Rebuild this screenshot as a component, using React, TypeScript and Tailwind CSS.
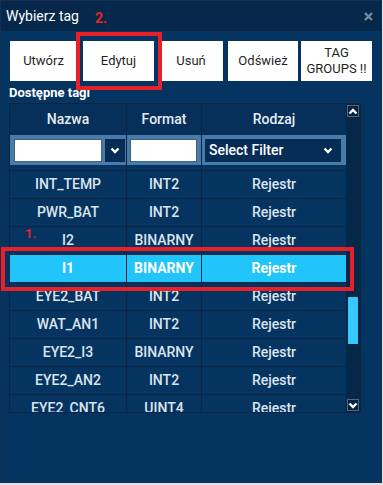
import React from "react";

interface TagRow {
  name: string;
  format: string;
  kind: string;
  selected?: boolean;
}

const rows: TagRow[] = [
  { name: "INT_TEMP", format: "INT2", kind: "Rejestr" },
  { name: "PWR_BAT", format: "INT2", kind: "Rejestr" },
  { name: "I2", format: "BINARNY", kind: "Rejestr" },
  { name: "I1", format: "BINARNY", kind: "Rejestr", selected: true },
  { name: "EYE2_BAT", format: "INT2", kind: "Rejestr" },
  { name: "WAT_AN1", format: "INT2", kind: "Rejestr" },
  { name: "EYE2_I3", format: "BINARNY", kind: "Rejestr" },
  { name: "EYE2_AN2", format: "INT2", kind: "Rejestr" },
  { name: "EYE2_CNT6", format: "UINT4", kind: "Rejestr" },
];

const Chevron = ({ up = false }: { up?: boolean }) => (
  <svg width="10" height="7" viewBox="0 0 10 7">
    <polyline
      points={up ? "1.5,5.5 5,2 8.5,5.5" : "1.5,1.5 5,5 8.5,1.5"}
      fill="none"
      stroke="white"
      strokeWidth="2.4"
    />
  </svg>
);

export default function App() {
  return (
    <div className="w-[383px] h-[485px] bg-[#dde2e7] font-['Roboto',sans-serif]">
      <div className="relative w-[382px] h-[483px] border border-[#15304f] bg-[#053461] flex flex-col">
        {/* Pasek tytułu */}
        <div className="h-[30px] bg-[#06294b] flex items-center justify-between pl-[5px] pr-[8px]">
          <span className="text-white text-[14px]">Wybierz tag</span>
          <svg width="9" height="9" viewBox="0 0 9 9">
            <path d="M1 1 L8 8 M8 1 L1 8" stroke="#7f8a97" strokeWidth="2.2" />
          </svg>
        </div>

        {/* Przyciski */}
        <div className="flex pl-[9px] pt-[10px] h-[50px] text-[13px] text-[#1f1f1f]">
          <button className="w-[67px] h-[40px] bg-white">Utwórz</button>
          <button className="ml-[6px] w-[71px] h-[40px] bg-white">Edytuj</button>
          <button className="ml-[5px] w-[64px] h-[40px] bg-white">Usuń</button>
          <button className="ml-[5px] w-[70px] h-[40px] bg-white">Odśwież</button>
          <button className="ml-[3px] w-[71px] h-[40px] bg-white leading-[16px]">
            TAG
            <br />
            GROUPS !!
          </button>
        </div>

        <div className="pl-[8px] mt-[3px] h-[19px] text-white text-[13px] font-bold leading-[18px]">
          Dostępne tagi
        </div>

        {/* Tabela */}
        <div className="ml-[8px] w-[352px] h-[310px] border border-[#0a2442] flex">
          <div className="w-[336px] flex flex-col">
            <div className="h-[31px] flex bg-[#062f59] text-[14px] font-medium text-[#e4ebf3]">
              <div className="w-[117px] border-r border-[#0a2442] flex items-center justify-center">Nazwa</div>
              <div className="w-[75px] border-r border-[#0a2442] flex items-center justify-center">Format</div>
              <div className="flex-1 flex items-center justify-center">Rodzaj</div>
            </div>
            <div className="h-[30px] flex bg-[#4a7aa9]">
              <div className="w-[117px] border-r border-[#0a2442] flex items-center pl-[4px]">
                <div className="w-[88px] h-[23px] bg-white border border-[#3d5f80]" />
                <div className="ml-[3px] w-[20px] h-[23px] bg-[#062d55] flex items-center justify-center">
                  <Chevron />
                </div>
              </div>
              <div className="w-[75px] border-r border-[#0a2442] flex items-center pl-[3px]">
                <div className="w-[67px] h-[23px] bg-white border border-[#3d5f80]" />
              </div>
              <div className="flex-1 flex items-center pl-[3px]">
                <div className="w-[136px] h-[23px] bg-[#062d55] flex items-center justify-between pl-[4px] pr-[8px] text-white text-[14px] font-medium">
                  <span>Select Filter</span>
                  <Chevron />
                </div>
              </div>
            </div>
            <div className="flex-1 overflow-hidden">
              <div className="h-[6px] flex border-b border-[#0a2442]">
                <div className="w-[117px] border-r border-[#0a2442]" />
                <div className="w-[75px] border-r border-[#0a2442]" />
              </div>
              {rows.map((r) => (
                <div
                  key={r.name}
                  className={`h-[28px] shrink-0 flex border-b border-[#0a2442] text-[14px] ${
                    r.selected
                      ? "bg-[#22c5fb] text-white font-bold"
                      : "text-[#dce4ed] font-medium"
                  }`}
                >
                  <div className="w-[117px] border-r border-[#0a2442] flex items-center justify-center">{r.name}</div>
                  <div className="w-[75px] border-r border-[#0a2442] flex items-center justify-center">{r.format}</div>
                  <div className="flex-1 flex items-center justify-center">{r.kind}</div>
                </div>
              ))}
            </div>
          </div>

          {/* Pasek przewijania */}
          <div className="flex-1 bg-[#052848] flex flex-col items-center pt-[1px] pb-[1px]">
            <div className="w-[12px] h-[12px] border border-[#5b6673] bg-[#062340] flex items-center justify-center">
              <Chevron up />
            </div>
            <div className="w-[10px] h-[47px] mt-[180px] bg-[#38c8ff]" />
            <div className="mt-auto w-[12px] h-[12px] border border-[#5b6673] bg-[#062340] flex items-center justify-center">
              <Chevron />
            </div>
          </div>
        </div>

        {/* Adnotacje */}
        <div className="absolute left-[75px] top-[31px] w-[86px] h-[58px] border-[4px] border-[#e8202a]" />
        <div className="absolute left-[94px] top-[7px] text-[#e8202a] text-[14px] font-bold">2.</div>
        <div className="absolute left-[0px] top-[246px] w-[353px] h-[44px] border-[4px] border-[#e8202a]" />
        <div className="absolute left-[24px] top-[223px] text-[#e8202a] text-[13px] font-bold">1.</div>
      </div>
    </div>
  );
}
